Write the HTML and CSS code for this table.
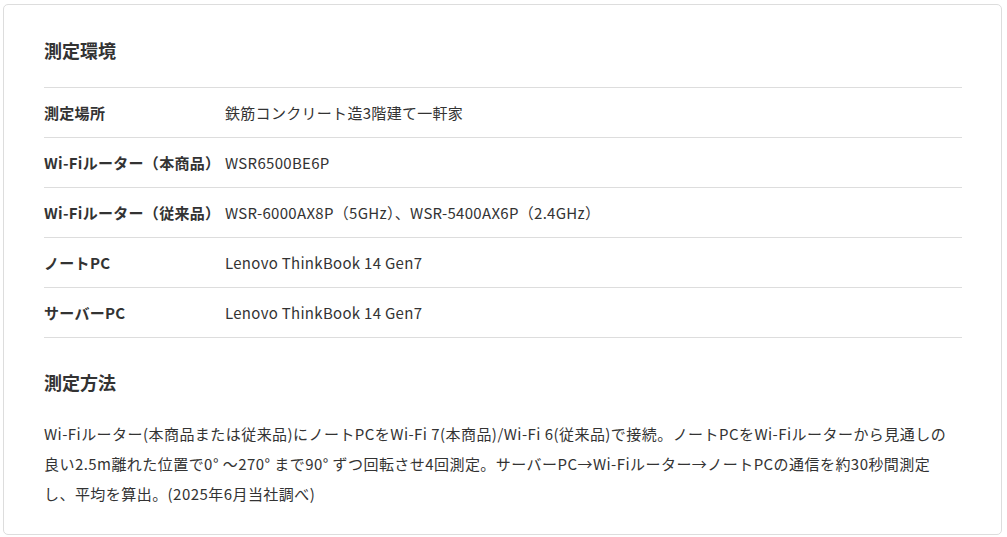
FILE: index.html
```html
<!DOCTYPE html>
<html lang="ja">
<head>
    <meta charset="UTF-8">
    <meta name="viewport" content="width=device-width, initial-scale=1.0">
    <title>測定環境</title>
    <link rel="stylesheet" href="styles.css">
</head>
<body>
    <div class="card">
        <h2 class="card-title">測定環境</h2>
        <table class="spec">
            <tr>
                <th>測定場所</th>
                <td>鉄筋コンクリート造3階建て一軒家</td>
            </tr>
            <tr>
                <th>Wi-Fiルーター（本商品）</th>
                <td>WSR6500BE6P</td>
            </tr>
            <tr>
                <th>Wi-Fiルーター（従来品）</th>
                <td>WSR-6000AX8P（5GHz）、WSR-5400AX6P（2.4GHz）</td>
            </tr>
            <tr>
                <th>ノートPC</th>
                <td>Lenovo ThinkBook 14 Gen7</td>
            </tr>
            <tr>
                <th>サーバーPC</th>
                <td>Lenovo ThinkBook 14 Gen7</td>
            </tr>
        </table>

        <h2 class="card-title method">測定方法</h2>
        <p class="note">Wi-Fiルーター(本商品または従来品)にノートPCをWi-Fi 7(本商品)/Wi-Fi 6(従来品)で接続。ノートPCをWi-Fiルーターから見通しの<br>良い2.5m離れた位置で0° ～270° まで90° ずつ回転させ4回測定。サーバーPC→Wi-Fiルーター→ノートPCの通信を約30秒間測定<br>し、平均を算出。(2025年6月当社調べ)</p>
    </div>
</body>
</html>
```

FILE: styles.css
```css
body {
    font-family: "Noto Sans CJK JP", "Noto Sans", sans-serif;
    margin: 0;
    padding: 4px 5px 3px 3px;
    background-color: #fff;
    color: #333;
}
.card {
    border: 1px solid #ddd;
    border-radius: 5px;
    padding: 32px 39px 25px 40px;
    background-color: #fff;
}
.card-title {
    font-size: 18px;
    line-height: 27px;
    font-weight: bold;
    margin: 0 0 23px;
}
.card-title.method {
    margin-top: 31px;
    margin-bottom: 23px;
}
.spec {
    width: 100%;
    border-collapse: collapse;
    border-top: 1px solid #ddd;
}
.spec th, .spec td {
    height: 49px;
    padding: 0;
    text-align: left;
    font-size: 15px;
    letter-spacing: 0.02em;
    border-bottom: 1px solid #ddd;
    vertical-align: middle;
}
.spec th {
    width: 181px;
    font-weight: bold;
}
.spec td {
    font-weight: normal;
}
.note {
    margin: 0;
    font-size: 15px;
    line-height: 30px;
    letter-spacing: 0.03em;
}
```
